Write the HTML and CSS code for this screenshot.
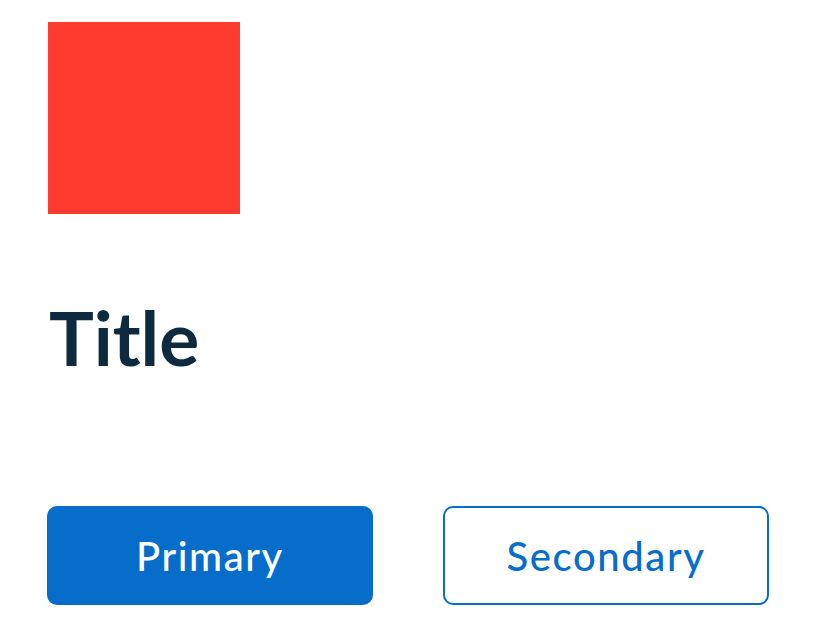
FILE: index.html
```html
<!DOCTYPE html>
<html>
<head>
<meta charset="utf-8">
<link rel="stylesheet" href="styles.css">
</head>
<body>
<main class="page">
  <div class="swatch"></div>
  <h1 class="title">Title</h1>
  <div class="actions">
    <button class="btn btn-primary">Primary</button>
    <button class="btn btn-secondary">Secondary</button>
  </div>
</main>
</body>
</html>
```
FILE: styles.css
```css
html, body {
  margin: 0;
  padding: 0;
  background: #ffffff;
}
.page {
  padding: 22px 47px 0 47px;
  font-family: "Lato", "Open Sans", sans-serif;
}
.swatch {
  width: 192px;
  height: 192px;
  margin-left: 1px;
  background: #ff3b30;
}
.title {
  margin: 83px 0 0 2px;
  font-size: 75px;
  line-height: 80px;
  font-weight: 700;
  color: #0d2a3f;
}
.actions {
  display: grid;
  grid-template-columns: 326px 326px;
  column-gap: 70px;
  margin-top: 129px;
}
.btn {
  height: 99px;
  border-radius: 10px;
  font-family: "Lato", "Open Sans", sans-serif;
  font-size: 40px;
  letter-spacing: 1.6px;
  font-weight: 500;
  cursor: pointer;
  padding: 0;
}
.btn-primary {
  background: #066dcb;
  color: #ffffff;
  border: 2px solid #066dcb;
}
.btn-secondary {
  background: #ffffff;
  color: #066dcb;
  border: 2px solid #066dcb;
}
```
